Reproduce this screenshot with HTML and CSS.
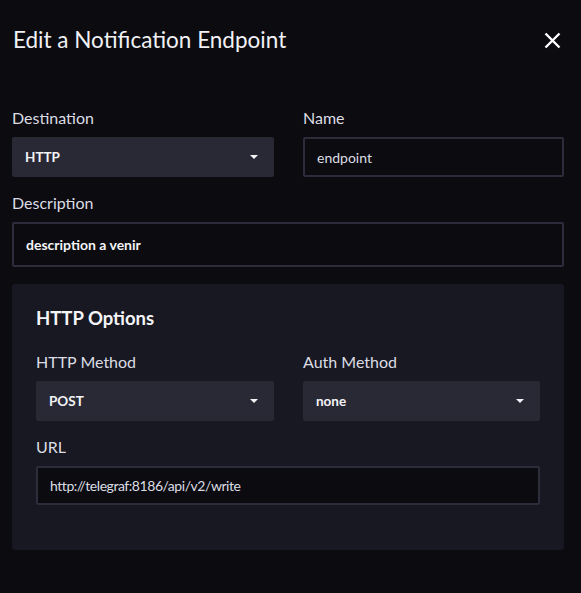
FILE: index.html
```html
<!DOCTYPE html>
<html>
<head>
<meta charset="utf-8">
<link rel="stylesheet" href="styles.css">
</head>
<body>
<div class="overlay">
  <div class="header">
    <h1 class="title">Edit a Notification Endpoint</h1>
    <button class="close" aria-label="Close">
      <svg width="17" height="17" viewBox="0 0 17 17"><path d="M1.5 1.5 L15.5 15.5 M15.5 1.5 L1.5 15.5" stroke="#fff" stroke-width="2.4" stroke-linecap="butt"/></svg>
    </button>
  </div>
  <div class="body">
    <div class="row two">
      <div class="field">
        <label class="label">Destination</label>
        <div class="select"><span>HTTP</span><span class="caret"></span></div>
      </div>
      <div class="field">
        <label class="label">Name</label>
        <div class="input"><span>endpoint</span></div>
      </div>
    </div>
    <div class="field stacked">
      <label class="label">Description</label>
      <div class="input tall bold"><span>description a venir</span></div>
    </div>
    <div class="panel">
      <h2 class="panel-title">HTTP Options</h2>
      <div class="row two inner">
        <div class="field">
          <label class="label">HTTP Method</label>
          <div class="select"><span>POST</span><span class="caret"></span></div>
        </div>
        <div class="field">
          <label class="label">Auth Method</label>
          <div class="select"><span>none</span><span class="caret"></span></div>
        </div>
      </div>
      <div class="field stacked">
        <label class="label">URL</label>
        <div class="input url"><span>http://telegraf:8186/api/v2/write</span></div>
      </div>
    </div>
  </div>
</div>
</body>
</html>
```
FILE: styles.css
```css
* { box-sizing: border-box; }
html, body { margin: 0; padding: 0; background: #0b0b10; }
body { font-family: Lato, "Liberation Sans", sans-serif; color: #e7e8ee; }
.overlay { width: 581px; height: 593px; background: #0b0b10; }
.header { display: flex; align-items: center; justify-content: space-between; margin-top: 26px; padding: 0 20px 0 13px; height: 28px; }
.title { margin: 0; font-size: 22.5px; line-height: 28px; font-weight: 400; color: #f1f1f5; }
.close { background: none; border: 0; padding: 0; width: 17px; height: 17px; display: flex; }
.body { padding: 55px 17px 0 12px; }
.row.two { display: grid; grid-template-columns: 262px 261px; column-gap: 29px; }
.field { display: flex; flex-direction: column; }
.field.stacked { margin-top: 17px; }
.label { font-size: 16px; color: #dcdde4; height: 18px; line-height: 18px; margin-bottom: 10px; }
.select { height: 40px; background: #292936; border-radius: 2px; display: flex; align-items: center; justify-content: space-between; padding: 0 16px 0 13px; font-size: 13.5px; font-weight: 700; color: #f4f4f7; }
.caret { width: 0; height: 0; border-left: 4px solid transparent; border-right: 4px solid transparent; border-top: 4px solid #f4f4f7; }
.input { height: 40px; border: 2px solid #2c2c3a; border-radius: 2px; background: #0b0b10; display: flex; align-items: center; padding: 0 12px; font-size: 14px; color: #dcdde4; }
.input.tall { height: 45px; }
.input.bold { font-weight: 700; color: #f4f4f7; }
.input.url { height: 39px; letter-spacing: -0.45px; }
.panel { margin-top: 17px; background: #171821; border-radius: 3px; padding: 23px 24px 0 24px; height: 266px; }
.panel-title { margin: 0 0 24px; font-size: 18.5px; font-weight: 700; color: #f4f4f7; line-height: 22px; }
.row.inner { grid-template-columns: 238px 237px; }
```
